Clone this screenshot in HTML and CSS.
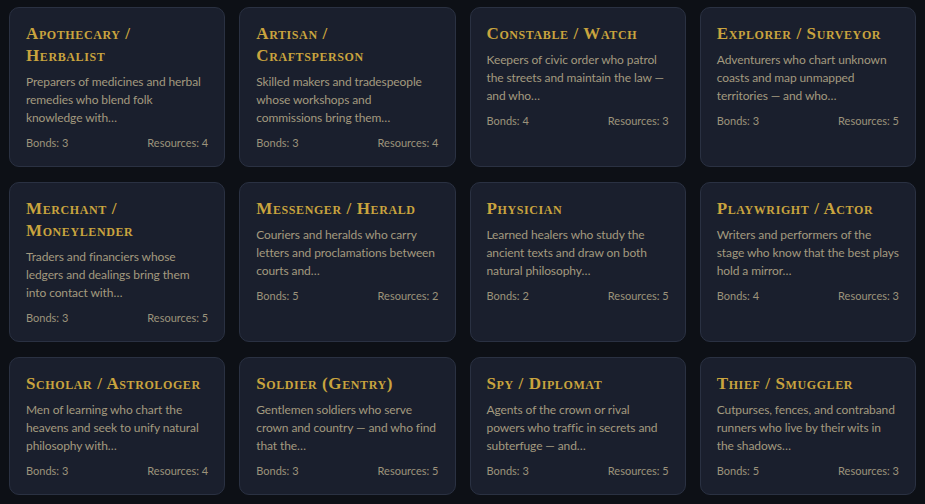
FILE: index.html
```html
<!DOCTYPE html>
<html lang="en">
<head>
<meta charset="utf-8">
<title>Professions</title>
<link rel="stylesheet" href="styles.css">
</head>
<body>
<main class="grid">
  <article class="card">
    <h3 class="card-title">Apothecary / Herbalist</h3>
    <p class="card-desc">Preparers of medicines and herbal remedies who blend folk knowledge with…</p>
    <div class="card-meta"><span>Bonds: 3</span><span>Resources: 4</span></div>
  </article>
  <article class="card">
    <h3 class="card-title">Artisan / Craftsperson</h3>
    <p class="card-desc">Skilled makers and tradespeople whose workshops and commissions bring them…</p>
    <div class="card-meta"><span>Bonds: 3</span><span>Resources: 4</span></div>
  </article>
  <article class="card">
    <h3 class="card-title">Constable / Watch</h3>
    <p class="card-desc">Keepers of civic order who patrol the streets and maintain the law — and who…</p>
    <div class="card-meta"><span>Bonds: 4</span><span>Resources: 3</span></div>
  </article>
  <article class="card">
    <h3 class="card-title">Explorer / Surveyor</h3>
    <p class="card-desc">Adventurers who chart unknown coasts and map unmapped territories — and who…</p>
    <div class="card-meta"><span>Bonds: 3</span><span>Resources: 5</span></div>
  </article>
  <article class="card">
    <h3 class="card-title">Merchant / Moneylender</h3>
    <p class="card-desc">Traders and financiers whose ledgers and dealings bring them into contact with…</p>
    <div class="card-meta"><span>Bonds: 3</span><span>Resources: 5</span></div>
  </article>
  <article class="card">
    <h3 class="card-title">Messenger / Herald</h3>
    <p class="card-desc">Couriers and heralds who carry letters and proclamations between courts and…</p>
    <div class="card-meta"><span>Bonds: 5</span><span>Resources: 2</span></div>
  </article>
  <article class="card">
    <h3 class="card-title">Physician</h3>
    <p class="card-desc">Learned healers who study the ancient texts and draw on both natural philosophy…</p>
    <div class="card-meta"><span>Bonds: 2</span><span>Resources: 5</span></div>
  </article>
  <article class="card">
    <h3 class="card-title">Playwright / Actor</h3>
    <p class="card-desc">Writers and performers of the stage who know that the best plays hold a mirror…</p>
    <div class="card-meta"><span>Bonds: 4</span><span>Resources: 3</span></div>
  </article>
  <article class="card">
    <h3 class="card-title">Scholar / Astrologer</h3>
    <p class="card-desc">Men of learning who chart the heavens and seek to unify natural philosophy with…</p>
    <div class="card-meta"><span>Bonds: 3</span><span>Resources: 4</span></div>
  </article>
  <article class="card">
    <h3 class="card-title">Soldier (Gentry)</h3>
    <p class="card-desc">Gentlemen soldiers who serve crown and country — and who find that the…</p>
    <div class="card-meta"><span>Bonds: 3</span><span>Resources: 5</span></div>
  </article>
  <article class="card">
    <h3 class="card-title">Spy / Diplomat</h3>
    <p class="card-desc">Agents of the crown or rival powers who traffic in secrets and subterfuge — and…</p>
    <div class="card-meta"><span>Bonds: 3</span><span>Resources: 5</span></div>
  </article>
  <article class="card">
    <h3 class="card-title">Thief / Smuggler</h3>
    <p class="card-desc">Cutpurses, fences, and contraband runners who live by their wits in the shadows…</p>
    <div class="card-meta"><span>Bonds: 5</span><span>Resources: 3</span></div>
  </article>
</main>
</body>
</html>
```
FILE: styles.css
```css
html, body {
  margin: 0;
  padding: 0;
  background: #0d1016;
}

body {
  font-family: Lato, "Noto Sans", sans-serif;
}

.grid {
  display: grid;
  grid-template-columns: repeat(4, 1fr);
  gap: 15px 14px;
  padding: 7px 9px 8px;
}

.card {
  background: #1a1f2d;
  border: 1px solid #2a3142;
  border-radius: 10px;
  padding: 15px 16px;
  display: flex;
  flex-direction: column;
}

.card-title {
  margin: 0 0 6px;
  font-family: "Liberation Serif", "DejaVu Serif", serif;
  font-variant: small-caps;
  font-weight: bold;
  font-size: 17px;
  line-height: 22px;
  letter-spacing: 0.6px;
  color: #c9a43e;
}

.card-desc {
  margin: 0;
  font-size: 12px;
  line-height: 18px;
  letter-spacing: -0.1px;
  color: #a39a7f;
}

.card-meta {
  margin-top: 8px;
  display: flex;
  justify-content: space-between;
  font-size: 11px;
  line-height: 16px;
  color: #9c937b;
}
```
